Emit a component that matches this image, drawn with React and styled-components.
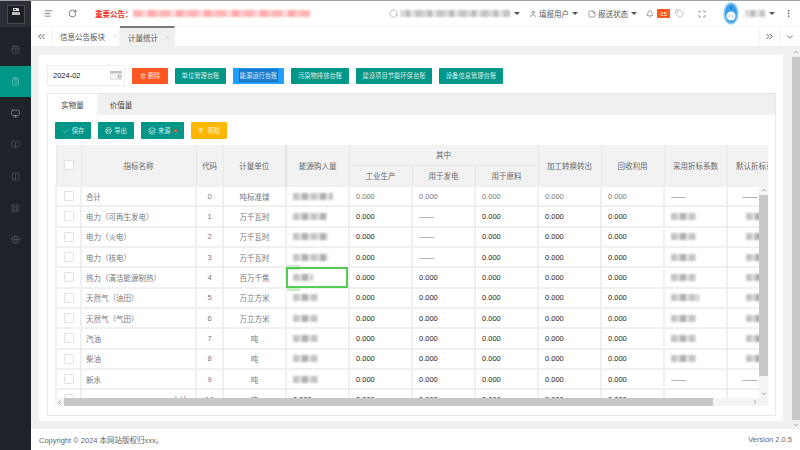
import React from 'react';
import styled, { createGlobalStyle } from 'styled-components';
import {
  AlignLeft, RotateCw, Hexagon, User, StickyNote, Bell, Tag, Maximize, MoreVertical,
  ChevronsLeft, ChevronsRight, ChevronDown, ChevronUp, ChevronLeft, ChevronRight, X, Trash2, Check, Printer,
  Layers, CalendarDays, ClipboardList, Monitor, BookOpen, Columns2, LayoutGrid, Globe,
} from 'lucide-react';

const Global = createGlobalStyle`
  html, body { margin: 0; padding: 0; background: #fff; overflow: hidden; }
  body { font-family: "Liberation Sans", "Noto Sans CJK SC", sans-serif; font-size: 7.5px; color: #666; }
  * { box-sizing: border-box; }
`;

const Page = styled.div`
  width: 800px; height: 450px; display: flex; overflow: hidden;
  border-top: 1px solid #a2a2a2;
`;
const Sidebar = styled.aside`
  width: 31px; flex: none; background: #20222a; display: flex; flex-direction: column;
  color: #5c5e64; box-shadow: 1px 0 1px rgba(0,0,0,.08);
`;
const LogoBar = styled.div`
  height: 26px; background: #2c2e36; display: flex; align-items: center; justify-content: center; margin-bottom: 7px;
`;
const LogoBox = styled.div`
  width: 18px; height: 19px; background: #1d1f26; border: 1px solid #484a50; display: flex;
  align-items: flex-start; justify-content: center; padding-top: 2px;
`;
const SideItem = styled.div`
  height: 31.7px; display: flex; align-items: center; justify-content: center;
  background: ${p => (p.$active ? '#009688' : 'transparent')};
  color: ${p => (p.$active ? '#7fd0c5' : p.$bright ? '#a8a9ac' : '#5c5e64')};
`;
const Main = styled.div`flex: 1; min-width: 0; display: flex; flex-direction: column;`;
const TopBar = styled.header`
  height: 25px; flex: none; display: flex; align-items: center; background: #fff; padding-left: 13px;
  color: #555;
`;
const TopIcon = styled.span`
  display: inline-flex; margin-left: ${p => p.$ml || 0}px; color: ${p => p.$color || '#444'};
`;
const Notice = styled.span`
  margin-left: 18px; color: #f52b2b; font-size: 7.5px; font-weight: 700; white-space: nowrap; width: 38px; flex: none;
`;
const PinkBand = styled.div`
  width: 177px; height: 7px; flex: none; filter: blur(1px);
  background: repeating-linear-gradient(90deg, #ffb4b4 0 9px, #ffd6d6 9px 15px, #ffa8a8 15px 22px, #ffc8c8 22px 28px);
`;
const GreyBand = styled.div`
  width: ${p => p.$w}px; height: 7px; flex: none; margin-left: ${p => p.$ml || 0}px; filter: blur(1px);
  background: repeating-linear-gradient(90deg, #d8d8d8 0 6px, #b9b9b9 6px 10px, #e2e2e2 10px 15px, #c4c4c4 15px 22px);
`;
const Caret = styled.i`
  width: 0; height: 0; flex: none; margin-left: ${p => p.$ml || 0}px; border: 3px solid transparent; border-bottom: 0;
  border-top: 3.5px solid #555;
`;
const TopLabel = styled.span`margin-left: 2px; width: 30px; flex: none; color: #555; white-space: nowrap;`;
const Badge = styled.span`
  margin-left: 3px; width: 13px; height: 9px; background: #ff5722; color: #fff; font-size: 6px;
  display: flex; align-items: center; justify-content: center; flex: none;
`;
const AvatarWrap = styled.span`display: inline-flex; margin-left: 17px; flex: none;`;

const TabBar = styled.nav`
  height: 21px; flex: none; display: flex; align-items: stretch; background: #fff; border-bottom: 1px solid #eee; border-top: 1px solid #f6f6f6;
`;
const TabCtl = styled.div`
  width: ${p => p.$w}px; flex: none; display: flex; align-items: center; justify-content: center; color: #333;
  ${p => p.$left && 'border-left: 1px solid #f2f2f2;'}
  ${p => p.$right && 'border-right: 1px solid #f2f2f2;'}
`;
const PageTab = styled.div`
  width: ${p => p.$w}px; flex: none; display: flex; align-items: center; padding-left: 8px; gap: 7px; color: #555;
  background: ${p => (p.$active ? '#f0f0f0' : '#fff')};
  border-top: ${p => (p.$active ? '2px solid #7a7a7a' : '0')};
  margin-top: ${p => (p.$active ? '-1px' : '0')};
  border-right: 1px solid #f2f2f2;
`;
const TabText = styled.span`white-space: nowrap;`;
const TabSpacer = styled.div`flex: 1;`;

const Content = styled.div`
  flex: 1; min-height: 0; background: #f0f0f0; display: flex; padding-left: 8px; gap: 9px;
`;
const Card = styled.main`
  width: 744px; flex: none; margin: 8px 0; background: #fff; padding: 10px 7px 5px 8px; display: flex; flex-direction: column; gap: 7px;
`;
const PageScroll = styled.div`
  width: 8px; flex: none; display: flex; flex-direction: column; align-items: center; color: #555; padding: 2px 0 1px;
`;
const PageThumb = styled.div`flex: 1; width: 8px; background: #c8c8c8; margin: 2px 0;`;
const Toolbar = styled.div`display: flex; align-items: center; height: 21px;`;
const DateBox = styled.div`
  width: 78px; height: 21px; border: 1px solid #eee; display: flex; align-items: center; justify-content: space-between;
  padding: 0 2px 0 5px; color: #222; font-size: 7.5px; margin-right: 7px;
`;
const Btn = styled.button`
  height: ${p => p.$h || 16}px; width: ${p => p.$w}px; flex: none; border: 0; padding: 0; margin-right: 7px; border-radius: 1px;
  background: ${p => p.$bg || '#009688'}; color: rgba(255,255,255,.85);
  font: inherit; font-size: 6.3px; display: inline-flex; align-items: center; justify-content: center; gap: 2px;
  ${p => p.$focus && 'box-shadow: inset 0 0 0 1px #1e9fff; outline: none;'}
`;
const FocusText = styled.span`background: #1a7fd0; padding: 1px 0; outline: 1px solid #1b6fb8;`;
const Dot = styled.i`width: 3.5px; height: 3.5px; border-radius: 50%; background: #ff5722; margin-left: 1px;`;
const HelpMark = styled.b`font-size: 8px; color: #fff; margin-right: 2px;`;

const Panel = styled.section`
  flex: 1; min-height: 0; border: 1px solid #e8e8e8; display: flex; flex-direction: column;
`;
const PanelHead = styled.div`height: 21px; flex: none; background: #f0f0f0; display: flex; align-items: stretch;`;
const PanelTab = styled.div`
  display: flex; align-items: center; justify-content: center; width: ${p => p.$w}px; color: #444;
  background: ${p => (p.$active ? '#fff' : 'transparent')};
`;
const PanelBody = styled.div`flex: 1; min-height: 0; padding: 7px 7px 0 7px; display: flex; flex-direction: column; gap: 6px;`;
const ActionRow = styled.div`display: flex; height: 17px;`;

const TableWrap = styled.div`position: relative; width: 713px; height: 261px; overflow: hidden;`;
const Table = styled.table`
  border-collapse: collapse; table-layout: fixed; width: 795px; color: #666;
`;
const Th = styled.th`
  height: ${p => p.$h}px; background: #f2f2f2; font-weight: 400; color: #666; padding: 0; text-align: center; white-space: nowrap;
  border: 1px solid #e8e8e8; border-top: 0;
  ${p => p.$split && 'border-left: 2px solid #e2e2e2;'}
`;
const Tr = styled.tr`height: 20.33px;`;
const Td = styled.td`
  padding: ${p => (p.$center ? '0' : p.$right ? '0 8px 0 0' : p.$tight ? '0 4px' : '0 6px')}; white-space: nowrap;
  overflow: ${p => (p.$sel ? 'visible' : 'hidden')};
  text-align: ${p => (p.$center ? 'center' : p.$right ? 'right' : 'left')};
  color: ${p => (p.$dark ? '#222' : '#777')};
  border: 2px solid #f0f0f0;
  ${p => p.$split && 'border-left: 2px solid #e4e4e4;'}
  ${p => p.$sel && 'position: relative;'}
`;
const Box = styled.span`
  display: block; width: 10px; height: 10px; margin: 0 auto; background: #fff; border: 1px solid #e2e2e2; border-radius: 1px;
`;
const Blur = styled.span`
  display: block; width: ${p => p.$w}px; height: 7px; margin-left: ${p => p.$ml || 0}px; filter: blur(1px);
  background: repeating-linear-gradient(90deg, #c4c4c4 0 6px, #e0e0e0 6px 9px, #b0b0b0 9px 15px, #e4e4e4 15px 18px);
`;
const SelBorder = styled.div`
  position: absolute; z-index: 2; inset: -1px 0 -1px -1px; border: 2px solid #55cc55; pointer-events: none;
`;
const SelPatch = styled.div`
  position: absolute; z-index: 1; left: 0; width: 13px; height: 5px; background: #cdeccd;
  ${p => (p.$top ? 'top: -3px;' : 'bottom: -4px;')}
`;
const VBar = styled.div`
  position: absolute; z-index: 3; top: 41px; right: 0; bottom: 8px; width: 9px; background: #f4f4f4; display: flex; flex-direction: column;
  align-items: center; color: #555;
`;
const ArrowV = styled.span`display: inline-flex; flex: none; margin: 1px 0;`;
const VThumb = styled.div`width: 9px; height: 181px; background: #c8c8c8; margin: 1px 0 auto;`;
const HBar = styled.div`
  position: absolute; z-index: 3; left: 0; right: 0; bottom: 0; height: 8px; background: #f4f4f4; display: flex; align-items: center; color: #555;
`;
const ArrowH = styled.span`display: inline-flex; flex: none; margin: 0 ${p => p.$mr || 0}px 0 1px;`;
const HThumb = styled.div`width: 649px; height: 8px; background: #c8c8c8; margin-left: 1px; margin-right: auto;`;

const Footer = styled.footer`
  height: 21px; flex: none; background: #fff; display: flex; align-items: center; justify-content: space-between; padding: 0 8px; color: #666;
`;

const Logo = () => (
  <svg width="8" height="9" viewBox="0 0 8 9">
    <path d="M1 0h5l1 1v2H1z" fill="#ddd" />
    <path d="M0 4h8v3H0z" fill="#bbb" />
    <path d="M2 1h2v1H2z" fill="#333" />
  </svg>
);
const Avatar = () => (
  <svg width="16" height="23" viewBox="0 0 16 23">
    <ellipse cx="8" cy="11.5" rx="7.6" ry="11.2" fill="#8ccbf4" />
    <ellipse cx="8" cy="11.5" rx="6" ry="9.6" fill="#3aa0ea" />
    <circle cx="8" cy="14" r="4.6" fill="#f4f9fd" />
    <path d="M6 4.5 8 8l2-3.5z" fill="#1f7fc8" />
    <circle cx="6.4" cy="14" r=".6" fill="#3a78b0" />
    <circle cx="9.6" cy="14" r=".6" fill="#3a78b0" />
  </svg>
);
const CalendarMark = () => (
  <svg width="12" height="9" viewBox="0 0 12 9">
    <rect width="12" height="9" fill="#e4e4e4" />
    <rect width="12" height="2" fill="#bdbdbd" />
    <rect x="1" y="3.5" width="6" height="4" fill="#f6f6f6" />
    <circle cx="9.5" cy="5.5" r="1.3" fill="none" stroke="#999" strokeWidth=".7" />
  </svg>
);

const rows = [
  { name: '合计', code: 0, unit: '吨标准煤', buy: 40, grey: true, power: '0.000', coef: null, def: null },
  { name: '电力（可再生发电）', code: 1, unit: '万千瓦时', buy: 34, power: '—', coef: 25, def: 20 },
  { name: '电力（火电）', code: 2, unit: '万千瓦时', buy: 35, power: '—', coef: 25, def: 20 },
  { name: '电力（核电）', code: 3, unit: '万千瓦时', buy: 35, power: '—', coef: 25, def: 20 },
  { name: '热力（清洁能源制热）', code: 4, unit: '百万千焦', buy: 20, power: '0.000', coef: 25, def: 20, sel: true },
  { name: '天然气（油田）', code: 5, unit: '万立方米', buy: 25, power: '0.000', coef: 28, def: 20 },
  { name: '天然气（气田）', code: 6, unit: '万立方米', buy: 25, power: '0.000', coef: 25, def: 20 },
  { name: '汽油', code: 7, unit: '吨', buy: 25, power: '0.000', coef: 25, def: 18 },
  { name: '柴油', code: 8, unit: '吨', buy: 25, power: '0.000', coef: 25, def: 18 },
  { name: '新水', code: 9, unit: '吨', buy: 25, power: '0.000', coef: null, def: null },
];
const widths = [25, 115, 27, 63, 63, 63, 63, 63, 63, 63, 63, 63, 63];

const Dash = '——';
const sideIcons = [
  { I: CalendarDays }, { I: ClipboardList, active: true }, { I: Monitor, bright: true }, { I: BookOpen },
  { I: Columns2 }, { I: LayoutGrid }, { I: Globe },
];

export default function App() {
  return (
    <>
      <Global />
      <Page>
        <Sidebar>
          <LogoBar><LogoBox><Logo /></LogoBox></LogoBar>
          {sideIcons.map(({ I, active, bright }, i) => (
            <SideItem key={i} $active={active} $bright={bright}><I size={9} strokeWidth={1.6} /></SideItem>
          ))}
        </Sidebar>
        <Main>
          <TopBar>
            <TopIcon><AlignLeft size={9} strokeWidth={1.8} /></TopIcon>
            <TopIcon $ml={15}><RotateCw size={9} strokeWidth={1.8} /></TopIcon>
            <Notice>重要公告：</Notice>
            <PinkBand />
            <TopIcon $ml={79} $color="#777"><Hexagon size={9} strokeWidth={1.2} /></TopIcon>
            <GreyBand $w={110} $ml={2} />
            <Caret $ml={4} />
            <TopIcon $ml={9}><User size={8} strokeWidth={1.4} /></TopIcon>
            <TopLabel>填报用户</TopLabel>
            <Caret $ml={3} />
            <TopIcon $ml={10}><StickyNote size={8} strokeWidth={1.4} /></TopIcon>
            <TopLabel>报送状态</TopLabel>
            <Caret $ml={3} />
            <TopIcon $ml={9}><Bell size={8} strokeWidth={1.4} /></TopIcon>
            <Badge>15</Badge>
            <TopIcon $ml={5} $color="#777"><Tag size={9} strokeWidth={1.3} /></TopIcon>
            <TopIcon $ml={14}><Maximize size={8} strokeWidth={1.6} /></TopIcon>
            <AvatarWrap><Avatar /></AvatarWrap>
            <GreyBand $w={20} $ml={6} />
            <Caret $ml={4} />
            <TopIcon $ml={9}><MoreVertical size={9} strokeWidth={1.8} /></TopIcon>
          </TopBar>
          <TabBar>
            <TabCtl $w={21} $right><ChevronsLeft size={11} strokeWidth={1.7} /></TabCtl>
            <PageTab $w={68}>
              <TabText>信息公告板块</TabText>
              <X size={5} color="#bbb" />
            </PageTab>
            <PageTab $w={55} $active>
              <TabText>计量统计</TabText>
              <X size={5} color="#bbb" />
            </PageTab>
            <TabSpacer />
            <TabCtl $w={20} $left><ChevronsRight size={11} strokeWidth={1.7} /></TabCtl>
            <TabCtl $w={21} $left><ChevronDown size={10} strokeWidth={1.5} /></TabCtl>
          </TabBar>
          <Content>
            <Card>
              <Toolbar>
                <DateBox>2024-02<CalendarMark /></DateBox>
                <Btn $w={36} $bg="#ff5722"><Trash2 size={6} />删除</Btn>
                <Btn $w={51}>单位管理台账</Btn>
                <Btn $w={51} $bg="#1e9fff" $focus><FocusText>能源运行台账</FocusText></Btn>
                <Btn $w={58}>污染物排放台账</Btn>
                <Btn $w={76}>建设项目节能环保台账</Btn>
                <Btn $w={64}>设备信息管理台账</Btn>
              </Toolbar>
              <Panel>
                <PanelHead>
                  <PanelTab $w={49} $active>实物量</PanelTab>
                  <PanelTab $w={48}>价值量</PanelTab>
                </PanelHead>
                <PanelBody>
                  <ActionRow>
                    <Btn $w={36} $h={17}><Check size={8} strokeWidth={1.5} />保存</Btn>
                    <Btn $w={36} $h={17}><Printer size={7} />导出</Btn>
                    <Btn $w={43} $h={17}><Layers size={8} />来源<Dot /></Btn>
                    <Btn $w={36} $h={17} $bg="#ffb800"><HelpMark>?</HelpMark>帮助</Btn>
                  </ActionRow>
                  <TableWrap>
                    <Table>
                      <colgroup>
                        {widths.map((w, i) => <col key={i} width={w} />)}
                      </colgroup>
                      <thead>
                        <tr>
                          <Th rowSpan={2} $h={20}><Box /></Th>
                          <Th rowSpan={2}>指标名称</Th>
                          <Th rowSpan={2}>代码</Th>
                          <Th rowSpan={2}>计量单位</Th>
                          <Th rowSpan={2} $split>能源购入量</Th>
                          <Th colSpan={3} $h={20}>其中</Th>
                          <Th rowSpan={2}>加工转换转出</Th>
                          <Th rowSpan={2}>回收利用</Th>
                          <Th rowSpan={2}>采用折标系数</Th>
                          <Th rowSpan={2}>默认折标系数</Th>
                          <Th rowSpan={2} />
                        </tr>
                        <tr>
                          <Th $h={21}>工业生产</Th>
                          <Th $h={21}>用于发电</Th>
                          <Th $h={21}>用于原料</Th>
                        </tr>
                      </thead>
                      <tbody>
                        {rows.map(r => {
                          const dark = !r.grey;
                          return (
                            <Tr key={r.code}>
                              <Td $center><Box /></Td>
                              <Td $tight>{r.name}</Td>
                              <Td $center>{r.code}</Td>
                              <Td $center>{r.unit}</Td>
                              <Td $split $sel={r.sel}>
                                {r.sel && <SelPatch $top />}
                                {r.sel && <SelPatch />}
                                {r.sel && <SelBorder />}
                                <Blur $w={r.buy} />
                              </Td>
                              <Td $dark={dark}>0.000</Td>
                              <Td $dark={dark && r.power !== '—'}>{r.power === '—' ? Dash : r.power}</Td>
                              <Td $dark={dark}>0.000</Td>
                              <Td $dark={dark}>0.000</Td>
                              <Td $dark={dark}>0.000</Td>
                              <Td>{r.coef ? <Blur $w={r.coef} /> : Dash}</Td>
                              <Td>{r.def ? <Blur $w={r.def} $ml={12} /> : <>&nbsp;&nbsp;&nbsp;&nbsp;{Dash}</>}</Td>
                              <Td />
                            </Tr>
                          );
                        })}
                        <Tr>
                          <Td $center><Box /></Td>
                          <Td $right>小计</Td>
                          <Td $center>10</Td>
                          <Td $center>吨</Td>
                          <Td $split $dark>0.000</Td>
                          <Td $dark>0.000</Td>
                          <Td $dark>0.000</Td>
                          <Td $dark>0.000</Td>
                          <Td $dark>0.000</Td>
                          <Td $dark>0.000</Td>
                          <Td />
                          <Td />
                          <Td />
                        </Tr>
                      </tbody>
                    </Table>
                    <VBar>
                      <ArrowV><ChevronUp size={6} strokeWidth={2} /></ArrowV>
                      <VThumb />
                      <ArrowV><ChevronDown size={6} strokeWidth={2} /></ArrowV>
                    </VBar>
                    <HBar>
                      <ArrowH><ChevronLeft size={7} strokeWidth={2} /></ArrowH>
                      <HThumb />
                      <ArrowH $mr={10}><ChevronRight size={6} strokeWidth={2} /></ArrowH>
                    </HBar>
                  </TableWrap>
                </PanelBody>
              </Panel>
            </Card>
            <PageScroll>
              <ChevronUp size={6} strokeWidth={2} />
              <PageThumb />
              <ChevronDown size={6} strokeWidth={2} />
            </PageScroll>
          </Content>
          <Footer>
            <span>Copyright © 2024 本网站版权归xxx。</span>
            <span>Version 2.0.5</span>
          </Footer>
        </Main>
      </Page>
    </>
  );
}
